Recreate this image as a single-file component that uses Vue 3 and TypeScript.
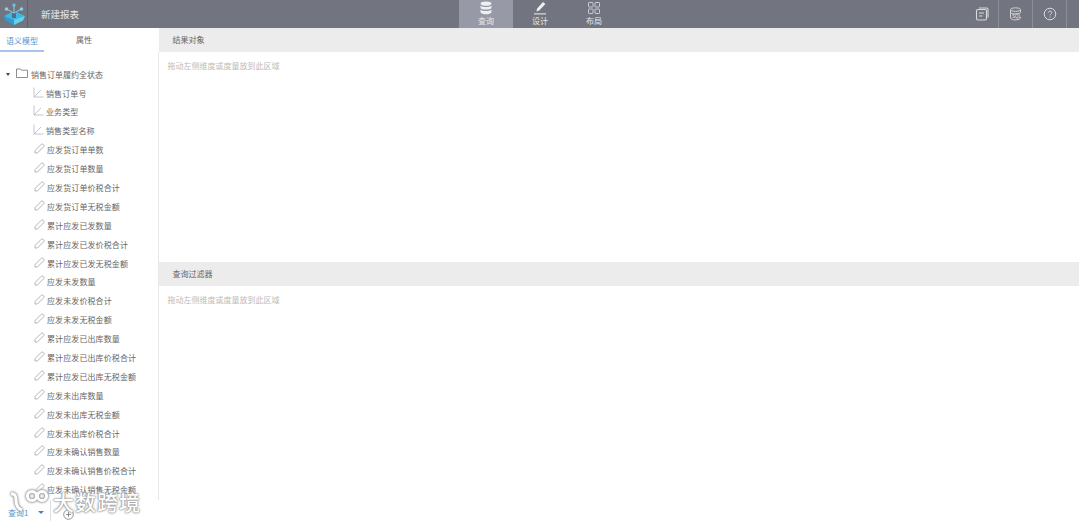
<script setup lang="ts">
const dims: string[] = ['销售订单号', '业务类型', '销售类型名称']
const measures: string[] = [
  '应发货订单单数', '应发货订单数量', '应发货订单价税合计', '应发货订单无税金额',
  '累计应发已发数量', '累计应发已发价税合计', '累计应发已发无税金额', '应发未发数量',
  '应发未发价税合计', '应发未发无税金额', '累计应发已出库数量', '累计应发已出库价税合计',
  '累计应发已出库无税金额', '应发未出库数量', '应发未出库无税金额', '应发未出库价税合计',
  '应发未确认销售数量', '应发未确认销售价税合计', '应发未确认销售无税金额'
]
</script>

<template>
  <div class="page">
    <header class="top">
      <div class="logo">
        <svg width="24" height="24" viewBox="0 0 24 24">
          <path d="M12 9 L23 14 L12 22 L2 14 Z" fill="#3fb8e6" />
          <path d="M2 14 L12 18 L12 23 L4 18.5 Z" fill="#2f9fd2" />
          <path d="M23 14 L12 18 L12 23 L21 18.5 Z" fill="#63d2ee" />
          <path d="M10 9 h4 v7 h-4 Z" fill="#4f6f85" />
          <circle cx="4.5" cy="7" r="1.8" fill="#7fd0e8" />
          <circle cx="12" cy="3" r="1.8" fill="#58b9d8" />
          <circle cx="19.5" cy="7" r="1.8" fill="#7fd0e8" />
          <path d="M4.5 7 L12 11 L19.5 7 M12 3 V11" stroke="#a9dcec" stroke-width=".8" fill="none" />
        </svg>
      </div>
      <div class="title">新建报表</div>
      <nav class="modes">
        <div class="mode active">
          <svg width="14" height="14" viewBox="0 0 14 14" fill="#eef0f3">
            <ellipse cx="7" cy="2.6" rx="5.5" ry="2.2" />
            <path d="M1.5 4.4 C3 6.6 11 6.6 12.5 4.4 V7 C11 9 3 9 1.5 7 Z" />
            <path d="M1.5 8.4 C3 10.6 11 10.6 12.5 8.4 V11.2 C11 14 3 14 1.5 11.2 Z" />
          </svg>
          <span>查询</span>
        </div>
        <div class="mode">
          <svg width="14" height="14" viewBox="0 0 14 14" fill="#eef0f3">
            <path d="M10 1 L12.4 3 L6.2 9.5 L3.4 10.4 L4.2 7.6 Z" />
            <path d="M1 12.4 H13 V13.4 H1 Z" />
          </svg>
          <span>设计</span>
        </div>
        <div class="mode">
          <svg width="14" height="14" viewBox="0 0 14 14" fill="none" stroke="#d5d7dc" stroke-width=".9">
            <rect x="1.5" y="1.5" width="4.5" height="4.5" rx=".6" />
            <rect x="8" y="1.5" width="4.5" height="4.5" rx=".6" />
            <rect x="1.5" y="8" width="4.5" height="4.5" rx=".6" />
            <rect x="8" y="8" width="4.5" height="4.5" rx=".6" />
          </svg>
          <span>布局</span>
        </div>
      </nav>
      <div class="tools">
        <div class="tool">
          <svg width="14" height="14" viewBox="0 0 14 14" fill="none" stroke="#d8dade" stroke-width="1.1">
            <rect x="1.5" y="2.5" width="10" height="10.5" rx="1.5" />
            <path d="M4 1 H11.5 Q13 1 13 2.5 V10.5" />
            <path d="M4 6 H9 M4 9 H7.5" />
          </svg>
        </div>
        <div class="tool">
          <svg width="14" height="14" viewBox="0 0 14 14" fill="none" stroke="#d8dade" stroke-width=".9">
            <ellipse cx="6.5" cy="2.6" rx="5" ry="1.8" />
            <path d="M1.5 2.6 V11 C2.5 13.4 9 13.4 11.5 11.6 M11.5 2.6 V5.5" />
            <path d="M1.5 5.8 C3 7.2 9 7.2 11.5 5.8" />
            <text x="3" y="10.8" font-size="4.6" fill="#e6e7ea" stroke="none" font-family="Liberation Sans">SQL</text>
          </svg>
        </div>
        <div class="tool">
          <svg width="14" height="14" viewBox="0 0 14 14" fill="none" stroke="#d8dade" stroke-width="1">
            <circle cx="7" cy="7" r="5.8" />
            <path d="M5.3 5.6 C5.3 3.6 8.8 3.6 8.8 5.6 C8.8 7 7 6.9 7 8.4" />
            <path d="M7 9.6 V10.6" />
          </svg>
        </div>
      </div>
    </header>

    <div class="body">
      <aside class="side">
        <div class="tabs">
          <div class="tab on">语义模型</div>
          <div class="tab">属性</div>
        </div>
        <div class="tree">
          <div class="root">
            <i class="caret"></i>
            <svg width="12" height="10" viewBox="0 0 12 10" fill="none" stroke="#6d7178" stroke-width=".8">
              <path d="M.5 1 H4.5 L5.5 2.2 H11.5 V9.5 H.5 Z" />
            </svg>
            <span>销售订单履约全状态</span>
          </div>
          <div v-for="d in dims" :key="d" class="leaf dim">
            <svg class="ico" width="11" height="11" viewBox="0 0 11 11" fill="none" stroke="#b4b7bc" stroke-width=".8">
              <path d="M1 .5 V10 H10.5 M1 10 L8 3" />
            </svg>
            <span>{{ d }}</span>
          </div>
          <div v-for="m in measures" :key="m" class="leaf">
            <svg class="ico" width="11" height="11" viewBox="0 0 11 11" fill="none" stroke="#a0a3a8" stroke-width=".8">
              <path d="M1 7.6 L7.4 1.2 Q8.2 .6 9.2 1.4 L9.8 2 Q10.4 2.8 9.8 3.6 L3.4 10 H1 Z" />
            </svg>
            <span>{{ m }}</span>
          </div>
        </div>
        <div class="foot">
          <div class="qtab">查询1<i class="qcaret"></i></div>
          <div class="plus">
            <svg width="11" height="11" viewBox="0 0 11 11" fill="none" stroke="#777" stroke-width=".8">
              <circle cx="5.5" cy="5.5" r="4.8" />
              <path d="M5.5 3 V8 M3 5.5 H8" />
            </svg>
          </div>
        </div>
      </aside>

      <main class="main">
        <section class="zone first">
          <div class="band">结果对象</div>
          <p class="hint">拖动左侧维度或度量放到此区域</p>
        </section>
        <section class="zone">
          <div class="band">查询过滤器</div>
          <p class="hint">拖动左侧维度或度量放到此区域</p>
        </section>
      </main>
    </div>

    <div class="mark">
      <svg width="44" height="26" viewBox="0 0 44 26" fill="none" stroke="#fff" stroke-width="3">
        <path d="M2 6 Q7 5 7 12 Q7 20 13 22" />
        <circle cx="23" cy="8" r="4.6" />
        <circle cx="33" cy="8" r="4.6" />
      </svg>
      <span>大数跨境</span>
    </div>
  </div>
</template>

<style>
html, body { margin: 0; background: #fff; }
</style>

<style scoped>
.page {
  position: relative;
  width: 1079px;
  height: 521px;
  overflow: hidden;
  display: flex;
  flex-direction: column;
  font-family: "Noto Sans CJK SC", "Liberation Sans", sans-serif;
  font-size: 8px;
  color: #666;
  background: #fff;
}
.top {
  height: 28px;
  flex: none;
  display: flex;
  align-items: stretch;
  background: #72757f;
  position: relative;
}
.logo {
  width: 27px;
  border-right: 1px solid #5f626b;
  display: flex;
  align-items: center;
  justify-content: center;
}
.title {
  margin-left: 13px;
  line-height: 28px;
  font-size: 9.5px;
  color: #e6e8eb;
}
.modes {
  position: absolute;
  left: 459px;
  top: 0;
  height: 28px;
  display: flex;
}
.mode {
  width: 54px;
  display: flex;
  flex-direction: column;
  align-items: center;
  padding-top: 1px;
  box-sizing: border-box;
  color: #e6e8eb;
  line-height: 10px;
}
.mode svg { display: block; margin-bottom: 1px; }
.mode.active { background: #979aa6; }
.tools {
  margin-left: auto;
  display: flex;
  margin-right: 12px;
}
.tool {
  width: 34px;
  border-right: 1px solid #8c8f98;
  box-sizing: border-box;
  display: flex;
  align-items: center;
  justify-content: center;
}
.body {
  flex: 1;
  display: flex;
  min-height: 0;
}
.side {
  width: 159px;
  flex: none;
  display: flex;
  flex-direction: column;
  position: relative;
}
.tabs {
  height: 24px;
  flex: none;
  display: flex;
}
.tab {
  width: 44px;
  line-height: 24px;
  text-align: center;
  margin-right: 18px;
  box-sizing: border-box;
  height: 24px;
}
.tab.on {
  color: #5b93cf;
  border-bottom: 2px solid #a9c4ea;
  line-height: 25px;
}
.tree {
  flex: 1;
  min-height: 0;
  overflow: hidden;
  padding-top: 12.6px;
  border-right: 1px solid #e8e8e8;
}
.root {
  height: 19px;
  display: flex;
  align-items: center;
  padding-left: 6px;
}
.root svg { margin: -2px 3px 0 6px; }
.caret {
  width: 0;
  height: 0;
  border-left: 2.5px solid transparent;
  border-right: 2.5px solid transparent;
  border-top: 3px solid #444;
}
.leaf {
  height: 18.9px;
  display: flex;
  align-items: center;
  padding-left: 34px;
  letter-spacing: .1px;
}
.leaf.dim { padding-left: 33px; }
.ico { margin-right: 2px; flex: none; margin-top: -2px; }
.leaf span { white-space: nowrap; }
.foot {
  height: 21px;
  flex: none;
  display: flex;
  align-items: center;
  color: #5b93cf;
}
.qtab {
  width: 51px;
  height: 21px;
  box-sizing: border-box;
  padding: 6px 0 0 8px;
  border-right: 1px solid #e0e0e0;
  display: flex;
  align-items: flex-start;
  line-height: 14px;
}
.qcaret {
  margin: 5px 0 0 10px;
  width: 0;
  height: 0;
  border-left: 3px solid transparent;
  border-right: 3px solid transparent;
  border-top: 3px solid #4a7fd0;
}
.plus { margin: 8px 0 0 12px; display: flex; }
.main {
  flex: 1;
  min-width: 0;
  display: flex;
  flex-direction: column;
}
.zone { flex: none; }
.zone.first { height: 234px; }
.band {
  height: 24px;
  line-height: 24px;
  padding-left: 13.5px;
  background: #ececec;
}
.hint {
  margin: 8px 0 0 8.5px;
  color: #bcbcbc;
  line-height: 12px;
}
.mark {
  position: absolute;
  left: 9px;
  top: 488px;
  display: flex;
  align-items: flex-start;
  color: #fff;
  font-size: 21px;
  letter-spacing: 1px;
  font-weight: 500;
  text-shadow: 0 0 1px #777, 0 0 2px #999, 0 0 3px #aaa;
  line-height: 26px;
}
.mark svg { filter: drop-shadow(0 0 1px #888) drop-shadow(0 0 1px #aaa); }
</style>
